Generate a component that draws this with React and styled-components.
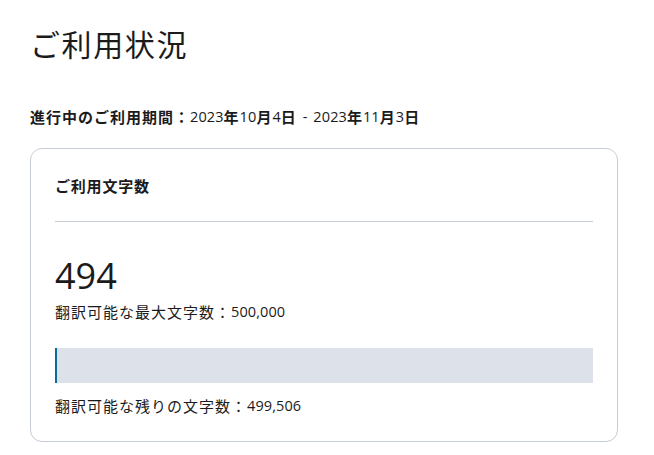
import React from 'react';
import styled, { createGlobalStyle } from 'styled-components';

const GlobalStyle = createGlobalStyle`
    body {
        margin: 0;
        background: #ffffff;
        color: #1b1b1b;
        font-family: "Open Sans", "Noto Sans CJK JP", sans-serif;
    }
`;

const usage = {
    start: '2023年10月4日',
    end: '2023年11月3日',
    used: 494,
    limit: 500000,
};

const Page = styled.div`
    padding: 22px 36px 12px 30px;
`;

const Title = styled.h1`
    margin: 0;
    font-size: 30px;
    font-weight: 400;
    letter-spacing: 1.6px;
    line-height: 46px;
    color: #1b1b1b;
`;

const Period = styled.p`
    margin: 39px 0 0;
    font-size: 15px;
    letter-spacing: 1px;
    line-height: 20px;
    font-weight: 700;
`;

const Num = styled.span`
    font-size: 14.5px;
    font-weight: 400;
    letter-spacing: 0.1px;
    vertical-align: top;
`;

const Dash = styled(Num)`
    padding: 0 2px;
`;

const Card = styled.section`
    margin-top: 21px;
    border: 1px solid #c6cdd6;
    border-radius: 12px;
    padding: 0 24px 25px;
`;

const CardHeader = styled.h2`
    margin: 0;
    height: 72px;
    display: flex;
    align-items: center;
    border-bottom: 1px solid #c6cdd6;
    font-size: 15px;
    letter-spacing: 0.8px;
    font-weight: 700;
`;

const Count = styled.div`
    margin-top: 32px;
    font-size: 36px;
    line-height: 44px;
    color: #1b1b1b;
`;

const Note = styled.p`
    margin: ${p => p.$top}px 0 0;
    font-size: 15px;
    letter-spacing: 1px;
    line-height: 20px;
`;

const Track = styled.div`
    margin-top: 26px;
    height: 35px;
    background: #dde1e9;
    display: flex;
`;

const Fill = styled.div`
    background: #0b6a99;
    min-width: 2px;
    height: 100%;
`;

const fmt = n => n.toLocaleString('en-US');

// digits in the date are set in the regular latin face, kanji stay bold
const DateText = ({ value }) => (
    <>
        {value.split(/(\d+)/).map((part, i) =>
            /^\d+$/.test(part) ? <Num key={i}>{part}</Num> : part
        )}
    </>
);

const App = () => {
    const remaining = usage.limit - usage.used;
    const pct = (usage.used / usage.limit) * 100;
    return (
        <>
            <GlobalStyle />
            <Page>
                <Title>ご利用状況</Title>
                <Period>
                    進行中のご利用期間：
                    <DateText value={usage.start} /><Dash> - </Dash><DateText value={usage.end} />
                </Period>
                <Card>
                    <CardHeader>ご利用文字数</CardHeader>
                    <Count>{usage.used}</Count>
                    <Note $top={4}>翻訳可能な最大文字数：<Num>{fmt(usage.limit)}</Num></Note>
                    <Track>
                        <Fill style={{ width: `${pct}%` }} />
                    </Track>
                    <Note $top={13}>翻訳可能な残りの文字数：<Num>{fmt(remaining)}</Num></Note>
                </Card>
            </Page>
        </>
    );
};

export default App;
